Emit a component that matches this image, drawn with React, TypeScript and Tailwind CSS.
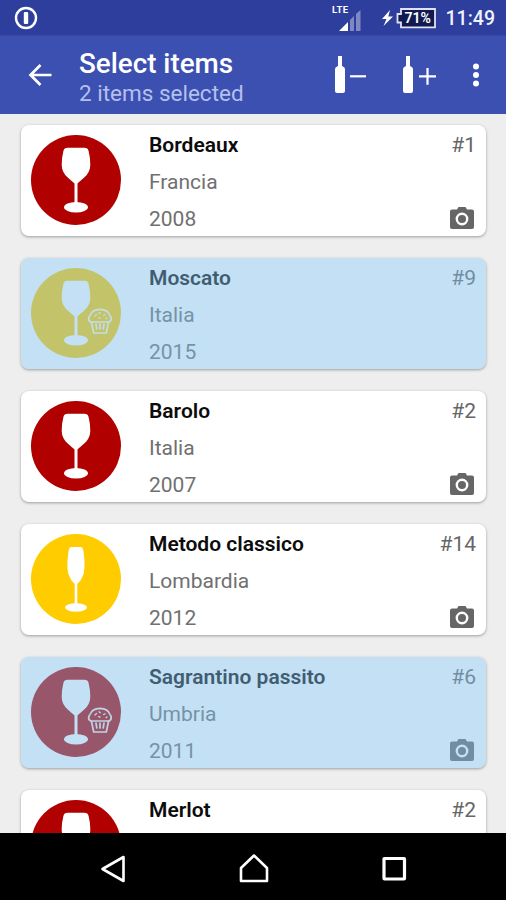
type Wine = {
    name: string;
    region?: string;
    year?: number;
    count: number;
    kind: 'red' | 'yellow';
    glass?: 'flute' | 'goblet';
    sweet?: boolean;
    photo?: boolean;
    selected?: boolean;
};

const wines: Wine[] = [
    { name: 'Bordeaux', region: 'Francia', year: 2008, count: 1, kind: 'red', photo: true },
    { name: 'Moscato', region: 'Italia', year: 2015, count: 9, kind: 'yellow', sweet: true, selected: true },
    { name: 'Barolo', region: 'Italia', year: 2007, count: 2, kind: 'red', photo: true },
    { name: 'Metodo classico', region: 'Lombardia', year: 2012, count: 14, kind: 'yellow', glass: 'flute', photo: true },
    { name: 'Sagrantino passito', region: 'Umbria', year: 2011, count: 6, kind: 'red', sweet: true, photo: true, selected: true },
    { name: 'Merlot', count: 2, kind: 'red' },
];

const Muffin = () => (
    <g fill="none" stroke="#fff" strokeOpacity="0.9" strokeWidth="1.7" strokeLinejoin="round" strokeLinecap="round">
        <path d="M60 54 Q57 53 57.8 50 Q58 48.5 59 47.5 Q61 41.5 69 41.3 Q77 41.5 79 47.5 Q80 48.5 80.2 50 Q80.5 53 78 54 Z" />
        <path d="M60.5 54.5 L62.7 65 H75.3 L77.5 54.5" />
        <path d="M65 56 L65.8 61 M69 56 V61 M73 56 L72.2 61" />
        <path d="M64 48 L65.5 46.5 M68 44.8 L69.3 45.6 M72.5 47.5 L74 46.8 M67.5 49.7 L69 50 M75 50.6 L76 50" strokeWidth="1.3" />
    </g>
);

const GlassBadge = ({ kind, glass, sweet }: Pick<Wine, 'kind' | 'glass' | 'sweet'>) => (
    <svg viewBox="0 0 90 90" className="size-[90px] shrink-0">
        <circle cx="45" cy="45" r="45" fill={kind === 'red' ? '#b00000' : '#ffcc00'} />
        {glass === 'flute' ? (
            <g fill="#fff">
                <path d="M40.5 13 H49.5 Q51.8 13 52.2 16 C53.6 24 54.2 34 52.6 40 Q50.8 46 46.3 50 V70 H43.7 V50 Q39.2 46 37.4 40 C35.8 34 36.4 24 37.8 16 Q38.2 13 40.5 13 Z" />
                <ellipse cx="45" cy="73.5" rx="11" ry="4.2" />
            </g>
        ) : (
            <g fill="#fff">
                <path d="M36.5 12.7 H53.5 Q56.8 12.7 57.6 16 Q59.4 23 59.3 30 Q59.2 34 57.6 37 C55.5 41.5 50.5 44.5 46.5 48.5 V68 H43.5 V48.5 C39.5 44.5 34.5 41.5 32.4 37 Q30.8 34 30.7 30 Q30.6 23 32.4 16 Q33.2 12.7 36.5 12.7 Z" />
                <ellipse cx="45" cy="72.2" rx="12" ry="5.2" />
            </g>
        )}
        {sweet && <Muffin />}
    </svg>
);

const Camera = () => (
    <svg viewBox="0 0 24 22" className="mr-0.5 h-[22px] w-6">
        <path fill="#666" d="M2 2.5 H7 L8.5 0 H15.5 L17 2.5 H22 Q24 2.5 24 4.5 V20 Q24 22 22 22 H2 Q0 22 0 20 V4.5 Q0 2.5 2 2.5 Z" />
        <circle cx="12" cy="12" r="5.2" fill="#666" stroke="#fff" strokeWidth="2.4" />
    </svg>
);

const WineCard = ({ wine }: { wine: Wine }) => (
    <div className="relative flex h-[111px] shrink-0 rounded-lg bg-white px-[10px] pt-[10px] shadow-[0_1px_3px_rgba(0,0,0,0.35)]">
        <GlassBadge kind={wine.kind} glass={wine.glass} sweet={wine.sweet} />
        <div className="ml-7 flex-1 text-[21px] leading-[37px] text-[#707070]">
            <div className="-mt-2 font-semibold text-[#0c0c0c]">{wine.name}</div>
            {wine.region && <div>{wine.region}</div>}
            {wine.year && <div>{wine.year}</div>}
        </div>
        <div className="flex flex-col items-end justify-between pb-[7px]">
            <div className="-mt-2 text-[21px] leading-[37px] text-[#666]">#{wine.count}</div>
            {wine.photo && <Camera />}
        </div>
        {wine.selected && <div className="absolute inset-0 rounded-lg bg-[rgba(124,187,232,0.46)]" />}
    </div>
);

const StatusBar = () => (
    <div className="flex h-[35px] shrink-0 items-center bg-[#2d3e9c] pr-[11px] pl-[14px]">
        <svg viewBox="0 0 24 24" className="size-6">
            <circle cx="12" cy="12" r="10" fill="none" stroke="#fff" strokeWidth="2.4" />
            <rect x="9.8" y="6" width="4.4" height="12" rx="1" fill="#fff" />
        </svg>
        <div className="ml-auto flex items-center">
            <svg viewBox="0 0 30 30" className="h-[30px] w-[30px]">
                <text x="0" y="10" fill="#fff" fontSize="9.5" fontWeight="700" fontFamily="Roboto, sans-serif" textLength="16">LTE</text>
                <path d="M7 28 L16 19 V28 Z" fill="#fff" />
                <path d="M18 28 V17 L22 13 V28 Z M24 28 V11 L28.5 7 V28 Z" fill="#8088c2" />
            </svg>
            <svg viewBox="0 0 55 24" className="ml-[20px] h-6 w-[55px]">
                <path d="M8 4 L0 13 H4.5 L1.5 20 L11 10.5 H6.3 Z" fill="#fff" />
                <path d="M19 3 H53 V21.3 H19 V16.5 H15.5 V8 H19 Z" fill="#101a50" stroke="#dfe2f2" strokeWidth="1.8" />
                <text x="22.5" y="17.3" fill="#fff" fontSize="14.5" fontWeight="600" fontFamily="Roboto, sans-serif" textLength="26.5" lengthAdjust="spacingAndGlyphs">71%</text>
            </svg>
            <span className="ml-[9px] pt-0.5 text-[19.5px] font-medium text-[#f0f2fb]">11:49</span>
        </div>
    </div>
);

const Bottle = ({ sign }: { sign: 'minus' | 'plus' }) => (
    <svg viewBox="0 0 36 40" className="h-10 w-9">
        <path d="M4 1 H8 V11 Q11 12 11 14 V36 Q11 38 9 38 H3 Q1 38 1 36 V14 Q1 12 4 11 Z" fill="#fff" />
        <path d={sign === 'plus' ? 'M17 21.3 H34 M25.5 13 V29.7' : 'M16 21.3 H32'} stroke="#fff" strokeWidth="2.2" />
    </svg>
);

const Toolbar = () => (
    <div className="flex h-[79px] shrink-0 items-center border-t border-[#3548a8] bg-[#3c50b1] text-white">
        <svg viewBox="0 0 24 24" className="ml-7 size-6">
            <path d="M23.5 12 H3 M12.5 2 L2.5 12 L12.5 22" fill="none" stroke="#fff" strokeWidth="2.7" />
        </svg>
        <div className="ml-[27px] pt-[5px]">
            <div className="text-[27.8px] leading-[31px] font-medium">Select items</div>
            <div className="text-[22.5px] leading-[29px] text-[#b4c0ee]">2 items selected</div>
        </div>
        <div className="ml-auto flex items-center pr-[26px]">
            <Bottle sign="minus" />
            <div className="ml-8"><Bottle sign="plus" /></div>
            <svg viewBox="0 0 8 24" className="ml-[34px] h-6 w-2" fill="#fff">
                <circle cx="4" cy="3.5" r="3" />
                <circle cx="4" cy="12" r="3" />
                <circle cx="4" cy="20.5" r="3" />
            </svg>
        </div>
    </div>
);

const NavBar = () => (
    <div className="flex h-[67px] shrink-0 items-center bg-black pt-1 pl-[99px]">
        <svg viewBox="0 0 28 30" className="h-[30px] w-7" fill="none" stroke="#fff" strokeWidth="2.6">
            <path d="M24.5 3 V27 L3.5 15 Z" strokeLinejoin="round" />
        </svg>
        <svg viewBox="0 0 32 32" className="ml-[111px] size-8" fill="none" stroke="#fff" strokeWidth="2.6">
            <path d="M3 15 L16 2.5 L29 15 V28 H3 Z" strokeLinejoin="round" />
        </svg>
        <svg viewBox="0 0 26 26" className="ml-[111px] size-[26px]" fill="none" stroke="#fff" strokeWidth="3.2">
            <rect x="3" y="2.5" width="20.5" height="20.5" rx="0.5" />
        </svg>
    </div>
);

const App = () => (
    <div className="flex h-[900px] w-[506px] flex-col overflow-hidden bg-[#eeeeee] font-['Roboto',sans-serif]">
        <StatusBar />
        <Toolbar />
        <div className="flex min-h-0 flex-1 flex-col gap-[22px] overflow-hidden pt-[11px] pr-[20px] pl-[21px]">
            {wines.map((wine) => (
                <WineCard key={wine.name} wine={wine} />
            ))}
        </div>
        <NavBar />
    </div>
);

export default App;
